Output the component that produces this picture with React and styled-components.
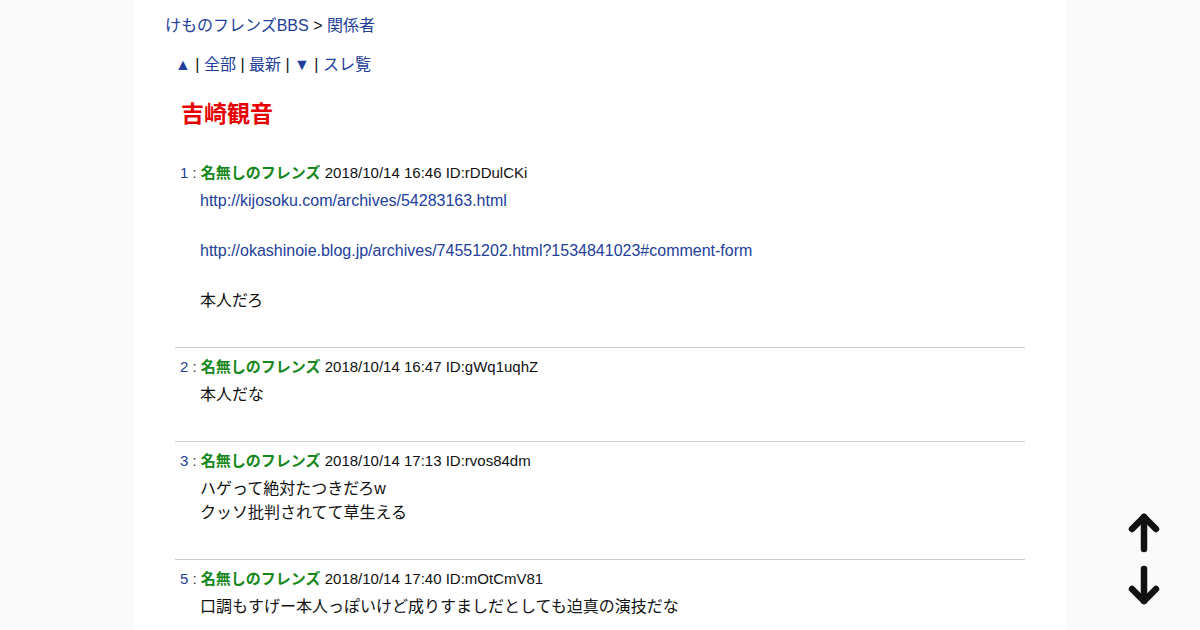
import React from "react";
import styled, { createGlobalStyle } from "styled-components";

const Global = createGlobalStyle`
  html, body { margin: 0; padding: 0; }
  body {
    background: #fafafa;
    font-family: "Liberation Sans", Arial, "Noto Sans CJK JP", sans-serif;
    color: #111;
    font-size: 16px;
  }
`;

const Column = styled.div`
  width: 932px;
  box-sizing: border-box;
  margin: 0 auto;
  min-height: 100vh;
  background: #fff;
  padding: 16px 41px 0;
`;

const Link = styled.a`
  color: #22409a;
  text-decoration: none;
`;

const Breadcrumb = styled.div`
  margin-left: -10px;
  line-height: 20px;
`;

const Nav = styled.div`
  margin-top: 19px;
  line-height: 20px;
`;

const Sep = styled.span`
  color: #111;
`;

const Title = styled.h1`
  margin: 24px 0 25px;
  padding-left: 6px;
  font-size: 23px;
  line-height: 30px;
  font-weight: bold;
  color: #e60000;
`;

const Post = styled.div`
  padding: 8px 0 34px;
  border-top: ${(p) => (p.$first ? "none" : "1px solid #cccccc")};
`;

const Header = styled.div`
  padding-left: 5px;
  font-size: 15px;
  line-height: 21px;
`;

const Num = styled.span`
  color: #22409a;
`;

const Colon = styled.span`
  color: #333;
`;

const Name = styled.b`
  color: #17871b;
  font-weight: bold;
`;

const Body = styled.div`
  margin-top: 6px;
  padding-left: 25px;
  line-height: 24px;
`;

const Line = styled.div`
  min-height: 24px;
`;

const Blank = styled.div`
  height: 26px;
`;

const Arrows = styled.div`
  position: fixed;
  right: 38px;
  top: 512px;
  display: flex;
  flex-direction: column;
  gap: 10px;
`;

const Arrow = ({ down }) => (
  <svg width="36" height="42" viewBox="0 0 36 42" fill="none" stroke="#111" strokeWidth="6.5" strokeLinecap="round" strokeLinejoin="round">
    {down ? (
      <>
        <path d="M18 5 V37" />
        <path d="M6 25 L18 37 L30 25" />
      </>
    ) : (
      <>
        <path d="M18 37 V5" />
        <path d="M6 17 L18 5 L30 17" />
      </>
    )}
  </svg>
);

const posts = [
  {
    n: 1,
    date: "2018/10/14 16:46 ID:rDDulCKi",
    body: [
      { link: "http://kijosoku.com/archives/54283163.html" },
      "",
      { link: "http://okashinoie.blog.jp/archives/74551202.html?1534841023#comment-form" },
      "",
      "本人だろ",
    ],
  },
  { n: 2, date: "2018/10/14 16:47 ID:gWq1uqhZ", body: ["本人だな"] },
  {
    n: 3,
    date: "2018/10/14 17:13 ID:rvos84dm",
    body: ["ハゲって絶対たつきだろw", "クッソ批判されてて草生える"],
  },
  {
    n: 5,
    date: "2018/10/14 17:40 ID:mOtCmV81",
    body: ["口調もすげー本人っぽいけど成りすましだとしても迫真の演技だな"],
  },
];

export default function App() {
  return (
    <>
      <Global />
      <Column>
        <Breadcrumb>
          <Link href="#">けものフレンズBBS</Link> &gt; <Link href="#">関係者</Link>
        </Breadcrumb>
        <Nav>
          <Link href="#">▲</Link> <Sep>|</Sep> <Link href="#">全部</Link> <Sep>|</Sep>{" "}
          <Link href="#">最新</Link> <Sep>|</Sep> <Link href="#">▼</Link> <Sep>|</Sep>{" "}
          <Link href="#">スレ覧</Link>
        </Nav>
        <Title>吉崎観音</Title>
        {posts.map((p, i) => (
          <Post key={p.n} $first={i === 0}>
            <Header>
              <Num>{p.n}</Num> <Colon>:</Colon> <Name>名無しのフレンズ</Name> {p.date}
            </Header>
            <Body>
              {p.body.map((l, j) =>
                l === "" ? (
                  <Blank key={j} />
                ) : (
                  <Line key={j}>{typeof l === "string" ? l : <Link href="#">{l.link}</Link>}</Line>
                )
              )}
            </Body>
          </Post>
        ))}
      </Column>
      <Arrows>
        <Arrow />
        <Arrow down />
      </Arrows>
    </>
  );
}
